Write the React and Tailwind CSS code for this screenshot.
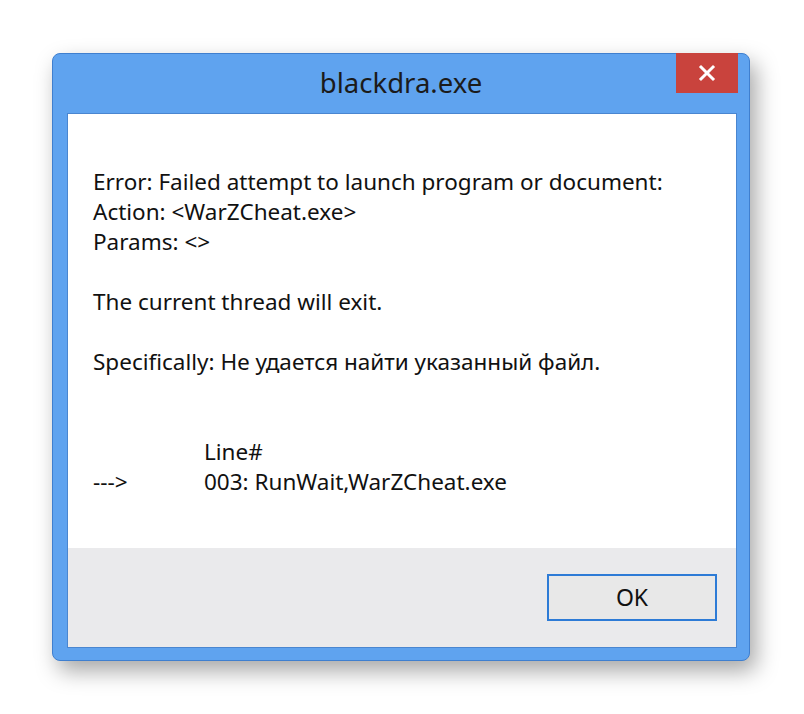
import React from 'react'

const lines = [
  { a: 'Error: Failed attempt to launch program or document:' },
  { a: 'Action: <WarZCheat.exe>' },
  { a: 'Params: <>' },
  { a: '' },
  { a: 'The current thread will exit.' },
  { a: '' },
  { a: 'Specifically: Не удается найти указанный файл.' },
  { a: '' },
  { a: '' },
  { a: '', b: 'Line#' },
  { a: '--->', b: '003: RunWait,WarZCheat.exe' },
]

export default function App() {
  return (
    <div className="w-[804px] h-[714px] bg-white pt-[53px] pl-[52px]" style={{ fontFamily: '"Noto Sans", "Open Sans", sans-serif' }}>
      <div className="relative w-[698px] h-[608px] bg-[#5fa3ef] rounded-[8px] border border-[#3f7fcf] shadow-[6px_10px_22px_rgba(0,0,0,0.35)] flex flex-col">
        <div className="h-[59px] flex items-center justify-center text-[27.5px] text-[#1b1b1b] pb-[1px]">
          blackdra.exe
        </div>
        <button className="absolute top-[-1px] right-[11px] w-[62px] h-[40px] bg-[#c9433d] flex items-center justify-center">
          <svg width="18" height="18" viewBox="0 0 18 18">
            <path d="M3 3 L15 15 M15 3 L3 15" stroke="white" strokeWidth="3" strokeLinecap="square" />
          </svg>
        </button>
        <div className="ml-[14px] mr-[12px] h-[535px] border border-[#4a86d0] flex flex-col">
          <div className="flex-1 bg-white pt-[53px] pl-[25px] text-[22.5px] leading-[30px] text-[#111]">
            {lines.map((l, i) => (
              <div key={i} className="flex h-[30px] whitespace-pre">
                {l.b !== undefined ? (
                  <>
                    <span className="w-[111px]">{l.a}</span>
                    <span>{l.b}</span>
                  </>
                ) : (
                  <span>{l.a}</span>
                )}
              </div>
            ))}
          </div>
          <div className="h-[99px] bg-[#eaeaec] flex items-center justify-end pr-[19px]">
            <button className="w-[170px] h-[47px] border-2 border-[#2d7bd6] bg-[#e8e8e8] text-[23px] text-[#111]">
              OK
            </button>
          </div>
        </div>
      </div>
    </div>
  )
}
